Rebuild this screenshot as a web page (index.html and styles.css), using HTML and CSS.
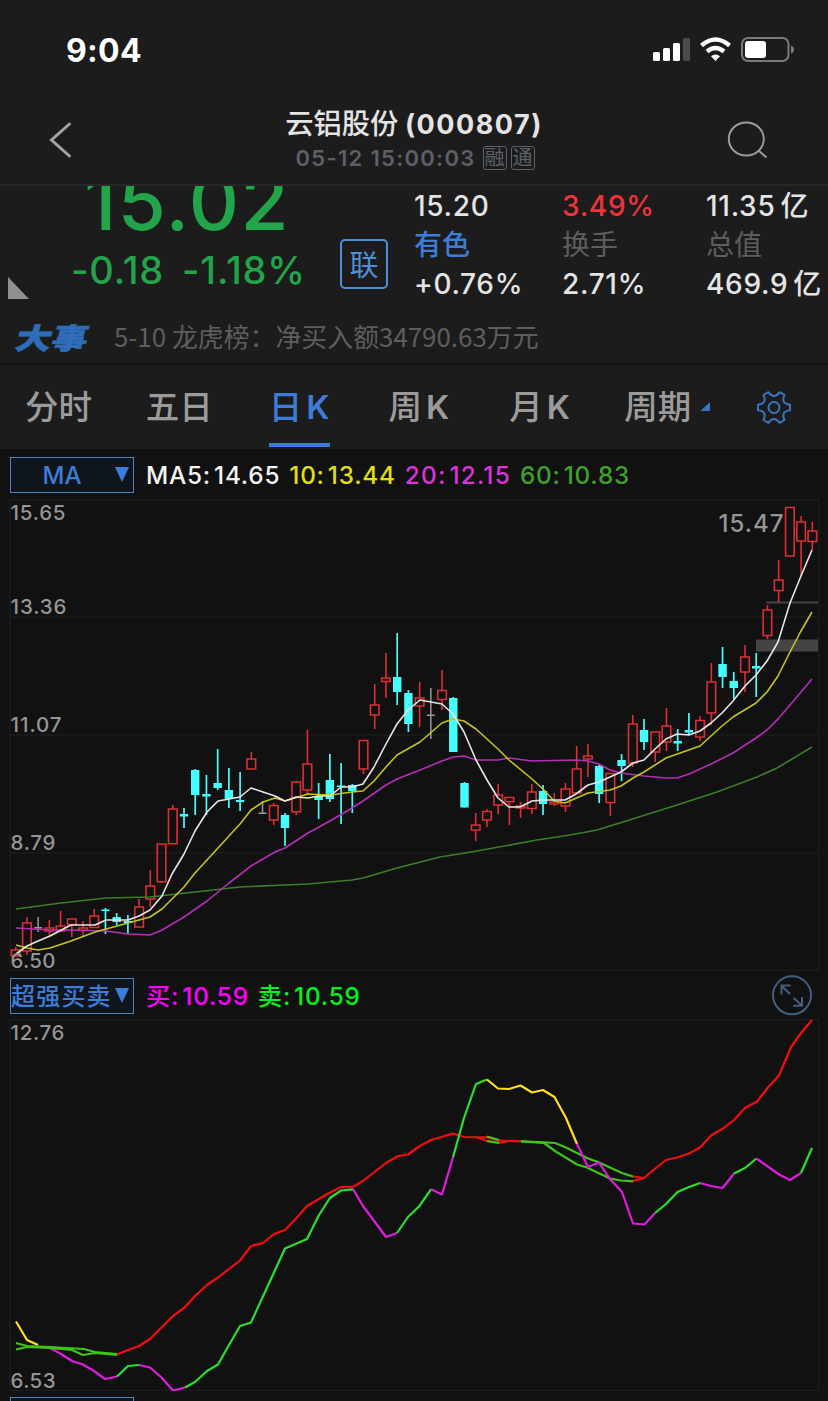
FILE: index.html
```
<!DOCTYPE html>
<html lang="zh-CN">
<head>
  <meta charset="UTF-8" />
  <title>云铝股份 (000807)</title>
  <link rel="stylesheet" href="styles.css">
</head>
<body>
  <div class="status">
    <span class="time">9:04</span>
    <svg class="status-icons" width="144" height="30" viewBox="650 35 144 30">
      <g fill="#fff">
        <rect x="653" y="52" width="7" height="9" rx="1.5"/>
        <rect x="663" y="48" width="7" height="13" rx="1.5"/>
        <rect x="673" y="43" width="7" height="18" rx="1.5"/>
        <rect x="683" y="38" width="7" height="23" rx="1.5" fill="#4b4b4b"/>
        <path d="M715.5 61 L711 56.3 Q715.5 52.8 720 56.3 Z"/>
        <rect x="745" y="41" width="21" height="17" rx="3"/>
      </g>
      <path d="M701.5 45.5 Q715.5 33.5 729.5 45.5 M707 51.5 Q715.5 44.5 724 51.5" fill="none" stroke="#fff" stroke-width="4.4"/>
      <rect x="742" y="38" width="46.5" height="23" rx="6" fill="none" stroke="#7b7b7b" stroke-width="2"/>
      <path d="M791 45.5 Q794 46.5 794 49.5 Q794 52.5 791 53.5 Z" fill="#7b7b7b"/>
    </svg>
  </div>

  <header class="header">
    <svg width="30" height="40" viewBox="45 120 30 40">
      <path d="M69.5 124 L51.5 140 L69.5 156" fill="none" stroke="#a3a3a3" stroke-width="3" stroke-linecap="round"/>
    </svg>
    <div class="title">
      <h1>云铝股份 <b>(000807)</b></h1>
      <p><span class="date">05-12 15:00:03</span><i>融</i><i>通</i></p>
    </div>
    <svg width="44" height="44" viewBox="726 118.5 44 44">
      <g fill="none" stroke="#9c9c9c" stroke-width="2">
        <ellipse cx="746.3" cy="139.5" rx="17.5" ry="16.5"/>
        <path d="M758.5 151 L766.5 158"/>
      </g>
    </svg>
  </header>

  <section class="quote">
    <div class="price">
      <div class="last">15.02</div>
      <div class="change"><span>-0.18</span><span>-1.18%</span></div>
    </div>
    <div class="badge">联</div>
    <div class="stats">
      <span>15.20</span><span class="up">3.49%</span><span>11.35<em>亿</em></span>
      <span class="link">有色</span><span class="label">换手</span><span class="label">总值</span>
      <span>+0.76%</span><span>2.71%</span><span>469.9<em>亿</em></span>
    </div>
    <div class="corner"></div>
  </section>

  <div class="news">
    <strong>大事</strong>
    <span class="news-text">5-10 龙虎榜：净买入额34790.63万元</span>
  </div>

  <nav class="tabs">
    <a>分时</a>
    <a>五日</a>
    <a class="active">日<b>K</b></a>
    <a>周<b>K</b></a>
    <a class="month">月<b>K</b></a>
    <a class="period">周期</a>
    <svg width="36" height="36" viewBox="756 388 36 36">
      <g fill="none" stroke="#3a74bd" stroke-width="2" stroke-linejoin="round">
        <path d="M768.4 391.2 Q774 399 779.6 391.2 L784.5 394 Q780.5 402.7 790 403.7 V409.3 Q780.5 410.3 784.5 419 L779.6 421.8 Q774 414 768.4 421.8 L763.5 419 Q767.5 410.3 758 409.3 V403.7 Q767.5 402.7 763.5 394 Z"/>
        <circle cx="774" cy="406.5" r="5.5"/>
      </g>
    </svg>
  </nav>

  <div class="legend legend-ma">
    <button>MA</button>
    <span class="ma5">MA5:<b>14.65</b></span>
    <span class="ma10">10:<b>13.44</b></span>
    <span class="ma20">20:<b>12.15</b></span>
    <span class="ma60">60:<b>10.83</b></span>
  </div>
  <svg id="kline" class="chart" width="828" height="472" viewBox="0 499 828 472"></svg>

  <div class="legend legend-signal">
    <button>超强买卖</button>
    <span class="buy">买:<b>10.59</b></span>
    <span class="sell">卖:<b>10.59</b></span>
    <svg class="expand" width="42" height="42" viewBox="771 974 42 42">
      <g fill="none" stroke="#435f7f" stroke-width="2">
        <circle cx="792" cy="995.3" r="19"/>
        <path d="M790 994 L781.5 986 M781.5 994.5 V985.5 H790.5 M793.5 998 L802 1005.5 M802 997 V1005.8 H793"/>
      </g>
    </svg>
  </div>
  <svg id="signal" class="chart" width="828" height="372" viewBox="0 1019 828 372"></svg>

  <div class="legend legend-next"><button></button></div>

  <script src="chart.js"></script>
</body>
</html>
```
FILE: styles.css
```
* {
  box-sizing: border-box;
}
body {
  margin: 0;
  width: 828px;
  height: 1401px;
  overflow: hidden;
  background: #1c1c1c;
  color: #e4e4e4;
  font-family: Inter, "Noto Sans CJK SC", sans-serif;
}
svg {
  display: block;
  flex: none;
}
h1, p {
  margin: 0;
}
b, em, i {
  font-style: normal;
  font-weight: inherit;
}

.status {
  display: flex;
  justify-content: space-between;
  height: 96px;
  padding: 35px 34px 0 66px;
}
.time {
  color: #fff;
  font-size: 32px;
  line-height: 31px;
  font-weight: 700;
  letter-spacing: 0.3px;
}

.header {
  display: flex;
  justify-content: space-between;
  align-items: center;
  height: 90px;
  padding: 0 58px 0 45px;
  border-bottom: 2px solid #272727;
}
.title {
  width: 270px;
  padding-top: 1px;
  margin-left: 27px;
  text-align: center;
}
.title h1 {
  height: 34px;
  font-size: 28.3px;
  line-height: 35px;
  font-weight: 500;
  white-space: nowrap;
}
.title h1 b {
  margin-left: -1px;
  font-size: 27px;
  font-weight: 700;
  letter-spacing: 1.5px;
}
.title p {
  display: flex;
  justify-content: center;
  align-items: center;
  height: 34px;
  padding-left: 2px;
  color: #5b606b;
  font-size: 22px;
  font-weight: 600;
  white-space: nowrap;
}
.title .date {
  margin-right: 3px;
  letter-spacing: 1.3px;
}
.title i {
  width: 24px;
  height: 24px;
  margin-left: 4px;
  border: 1px solid #5b606b;
  border-radius: 3px;
  font-size: 20px;
  line-height: 23px;
  font-weight: 400;
  text-align: center;
}

.quote {
  position: relative;
  display: flex;
  height: 124px;
  overflow: hidden;
}
.price {
  width: 340px;
  color: #22a44a;
  font-weight: 500;
}
.last {
  height: 60px;
  margin-top: -14px;
  padding-left: 84px;
  font-size: 78px;
  line-height: 60px;
  letter-spacing: 1.5px;
}
.change {
  display: flex;
  gap: 18px;
  padding-left: 71px;
  margin-top: 18px;
  font-size: 38px;
  line-height: 40px;
  letter-spacing: 0.8px;
}
.badge {
  width: 48px;
  height: 50px;
  margin: 53px 27px 0 0;
  border: 2px solid #4d8fd9;
  border-radius: 5px;
  color: #4d8fd9;
  font-size: 29px;
  line-height: 49px;
  text-align: center;
}
.stats {
  display: grid;
  grid-template-columns: 148px 144px 122px;
  grid-auto-rows: 39px;
  margin-left: -1px;
  padding-top: 1px;
  font-size: 28px;
  line-height: 39px;
  font-weight: 500;
  letter-spacing: 0.7px;
  white-space: nowrap;
}
.stats em {
  margin-left: 5px;
}
.up {
  color: #f0323a;
}
.stats .link {
  color: #3d7dd8;
  letter-spacing: 0;
}
.stats .label {
  color: #5e5e5e;
  font-weight: 400;
  letter-spacing: 0;
}
.corner {
  position: absolute;
  left: 8px;
  top: 91px;
  width: 21px;
  height: 22px;
  background: #8f8f8f;
  clip-path: polygon(0 0, 100% 100%, 0 100%);
}

.news {
  display: flex;
  align-items: center;
  height: 55px;
  padding-left: 17px;
  border-bottom: 2px solid #131313;
}
.news strong {
  width: 97px;
  color: #2f6db8;
  font-family: "Noto Sans CJK SC", sans-serif;
  font-size: 36px;
  line-height: 40px;
  font-weight: 900;
  margin-top: -2px;
  -webkit-text-stroke: 0.7px #2f6db8;
  transform: skewX(-14deg) scaleY(0.8);
}
.news-text {
  color: #5e5e5e;
  font-family: "Noto Sans CJK SC", sans-serif;
  font-size: 25.9px;
  line-height: 50px;
  font-weight: 400;
  margin-top: -1px;
}

.tabs {
  display: flex;
  height: 84px;
  padding: 0 36px 0 25px;
  color: #9b9b9b;
  font-size: 33.5px;
  line-height: 84px;
  font-weight: 500;
}
.tabs a {
  width: 121px;
  height: 84px;
  white-space: nowrap;
}
.tabs b {
  margin-left: 4px;
  font-size: 33px;
  font-weight: 600;
}
.tabs .active {
  width: 61px;
  height: 82px;
  margin: 0 59px 0 2px;
  border-bottom: 4px solid #3d7dd8;
  color: #3d7dd8;
}
.tabs .month {
  width: 115px;
}
.tabs .period {
  width: 132px;
}
.period::after {
  content: "";
  display: inline-block;
  width: 10px;
  height: 9px;
  margin-left: 9px;
  vertical-align: 8px;
  background: #3a74bd;
  clip-path: polygon(100% 0, 100% 100%, 0 100%);
}
.tabs svg {
  margin-top: 24px;
}

.legend {
  display: flex;
  padding: 8px 10px 0;
  background: #111;
  font-size: 24.3px;
  line-height: 37px;
  font-weight: 500;
  letter-spacing: 0.8px;
  white-space: nowrap;
}
.legend-ma {
  height: 50px;
  padding-top: 8px;
  gap: 9px;
}
.legend-signal {
  height: 48px;
  padding-top: 7px;
  gap: 9px;
}
.legend-next {
  height: 10px;
  padding-top: 6px;
}
.legend button {
  position: relative;
  width: 124px;
  height: 36px;
  margin-right: 3px;
  padding: 0 20px 0 0;
  border: 1px solid #4a86bd;
  background: #0e151d;
  color: #3d7dd8;
  font: inherit;
  font-size: 24px;
  line-height: 35px;
  letter-spacing: 0;
}
.legend-signal button {
  padding: 0;
  text-align: left;
  letter-spacing: 1.2px;
}
.legend button::after {
  content: "";
  position: absolute;
  right: 4px;
  top: 9px;
  width: 14px;
  height: 15px;
  background: #3d7dd8;
  clip-path: polygon(0 0, 100% 0, 50% 100%);
}
.legend b {
  margin-left: 3px;
}
.ma5 { color: #f4f4f4; }
.ma10 { color: #e0e010; }
.ma20 { color: #dc32dc; letter-spacing: 1.2px; }
.ma60 { color: #41a02c; }
.buy { color: #ff00ff; }
.sell { color: #00f51a; }
.expand {
  margin: -4px 5px 0 auto;
}

.chart {
  background: #111;
  font-size: 20.5px;
  font-weight: 500;
}
.chart polyline {
  fill: none;
  stroke-linejoin: round;
}
.grid {
  fill: none;
  stroke: #1d1d1d;
  stroke-width: 1.5;
}
.axis {
  fill: #969696;
}
```
FILE: chart.js
```
const STEP = 11.22;
const START = 15.7;

// r = up, c = down, g = unchanged: [type, high, top, bottom, low]
const candles = [
  ['r', 947, 950, 956, 957], ['r', 917, 923, 951, 955], ['g', 917, 927.7, 927.7, 932],
  ['r', 920, 928, 931, 937], ['r', 911, 926, 931, 931], ['r', 919, 919, 924.5, 937],
  ['r', 921, 928, 930.5, 936], ['r', 909, 916, 927.5, 928], ['c', 908, 909.5, 911, 934],
  ['c', 913, 917, 922, 925], ['c', 915, 921, 923, 934], ['r', 899, 907, 927, 927],
  ['r', 870, 886, 899, 907], ['r', 844, 844, 881.7, 883], ['r', 805, 809, 843.7, 844],
  ['c', 808, 814, 816.5, 828], ['c', 769, 770, 795, 815], ['c', 775, 794, 796.5, 815],
  ['c', 749, 783, 788, 790], ['c', 768, 790, 799, 808], ['c', 772, 800, 802, 811],
  ['r', 752, 759, 769, 769], ['g', 801, 813.3, 813.3, 813.3], ['r', 803, 805.5, 820, 825],
  ['c', 813, 815, 828, 846], ['r', 781, 782, 811.7, 815], ['r', 729.5, 764, 790, 795],
  ['c', 783, 796, 800, 819], ['c', 754, 780, 799, 802], ['c', 763, 785.5, 787, 824],
  ['c', 784, 785, 791, 813], ['r', 740, 740.5, 769, 774], ['r', 684, 705, 715, 729],
  ['r', 653, 678, 681.5, 698], ['c', 633, 677, 692, 705], ['c', 690, 693, 724, 732],
  ['r', 682, 698, 706, 727], ['g', 688, 715.3, 715.3, 739], ['r', 670, 690.5, 699.5, 710],
  ['c', 697, 698, 752, 752], ['c', 782, 783, 807.5, 807.5], ['r', 813, 825, 830, 841],
  ['r', 809, 811.5, 820, 827], ['r', 784, 795, 805, 814], ['r', 797, 797.5, 801.7, 825],
  ['r', 802, 806, 808, 818], ['r', 784, 792, 808.5, 814], ['c', 785, 791, 804, 815],
  ['r', 793, 802, 804, 806], ['r', 783, 789, 806, 812], ['r', 746, 769, 793, 793],
  ['r', 744, 756, 759, 777], ['c', 765, 766, 794, 803], ['r', 773, 773.5, 802.5, 816],
  ['c', 754, 760, 766, 781], ['r', 715, 724, 763, 767], ['c', 719, 730, 742, 750],
  ['r', 732, 732, 752, 762], ['r', 708, 726, 742, 751], ['c', 729, 741, 743.5, 751],
  ['c', 713, 730, 732.5, 735], ['r', 716, 720.5, 737, 741], ['r', 663, 682, 713, 725],
  ['c', 647, 664, 677, 688], ['c', 672, 681, 688, 699], ['r', 645, 657, 672, 692],
  ['c', 653, 666, 668.5, 697], ['r', 605, 610, 635.5, 639], ['r', 560, 580, 590.5, 602],
  ['r', 507, 507.5, 556, 556], ['r', 516, 522, 541, 576], ['r', 522, 531, 541.5, 550]
];

const averages = [
  ['#3b7f27', '16,909 61,903 106,898 150,897 195,892 240,887 285,885 308,884 352,880 363,878 397,868 440,857 477,851 537,840 570,835 597,830 623,822 677,805 717,792 757,777 777,768 812,747'],
  ['#b52db8', '16,928 50,930 71,930 106,931 128,934 150,935 162,930 184,917 207,901 229,883 251,866 275,852 285,848 308,833 330,821 352,808 363,801 386,785 397,779 420,770 442,761 453,757 464,756 476,760 498,760 509,758 532,761 576,760 588,761 599,764 610,770 621,773 644,776 666,778 677,778 689,774 711,764 733,753 756,738 767,730 778,719 790,705 801,692 812,679'],
  ['#c4c41c', '16,945 27,948 38,950 50,948 71,941 95,932 117,926 139,920 150,917 162,909 184,887 195,873 218,848 240,824 251,810 263,802 275,798 285,801 308,794 330,795 352,792 363,791 374,781 386,767 397,755 420,742 442,723 453,719 464,721 476,729 498,749 509,760 532,779 543,789 554,801 565,803 588,793 610,790 621,786 633,778 644,772 666,758 700,746 711,736 722,726 733,717 756,703 767,692 778,676 790,652 801,631 812,612'],
  ['#e6e6e6', '16,954 27,946 38,941 50,936 71,925 95,925 106,920 128,920 139,916 150,910 162,896 172,874 184,854 195,831 207,812 218,801 240,797 251,788 263,792 275,796 285,801 296,797 308,798 318,796 330,796 341,787 352,787 363,784 374,767 386,744 397,724 408,710 420,700 442,704 453,714 464,732 476,760 487,780 498,798 509,807 520,807 532,801 543,800 565,800 576,794 588,785 599,782 621,772 633,763 644,760 655,749 666,739 677,734 689,735 700,731 711,723 722,713 733,701 745,686 756,675 767,661 778,642 790,603 801,576 812,550']
];

const RED = '#f20d12';
const GREEN = '#2ae02e';
const LIME = '#3fc418';
const PINK = '#e01be0';
const YELLOW = '#ffdf20';

const signals = [
  [RED, '117,1354.5 128,1350 139,1346 150,1339 173,1316 184,1308 196,1295 207,1285 218,1277.5 229,1269 240,1260.5 251,1246 263,1243 274,1234 285,1230 296,1218.5 307,1206 329,1193 341,1187 353,1186.7 363,1181 377,1170 386,1163 398,1156 408,1154.5 419,1146.5 431,1140 453,1133.5 464,1137 487,1137.3 499,1140.7 521,1141.3'],
  [RED, '476,1137 487,1141 499,1143 509,1141'],
  [RED, '633,1176.5 644,1178 654,1169.5 666,1160 677,1157.5 689,1153.5 700,1147.5 711,1135.5 723,1128.5 734,1120 745,1108 757,1101.5 768,1087.5 779,1075.5 791,1047 801,1033 812,1020'],
  [RED, '633,1181 644,1178'],
  [LIME, '487,1136.5 499,1140'],
  [LIME, '487,1141 499,1143'],
  [LIME, '521,1141.3 544,1142.3 555,1143 566,1147.5 587,1158 599,1162.5 622,1173 633,1176.5'],
  [LIME, '521,1141.3 544,1143 555,1151 577,1164.5 587,1167.5 610,1178.5 621,1180.5 633,1181.3'],
  [PINK, '50,1348 61,1354 72,1361 83,1364.5 94,1371 105,1379 117,1376.5'],
  [YELLOW, '16,1321.5 27,1340 38,1345'],
  [LIME, '16,1343 27,1346 50,1347 84,1349 95,1352 117,1354'],
  [LIME, '16,1349.5 27,1347 50,1348 72,1350 83,1355 95,1353 117,1355'],
  [GREEN, '117,1376.5 128,1366 139,1365'],
  [PINK, '139,1365 150,1367.5 161,1377 173,1390.5 185,1387.5'],
  [GREEN, '185,1387.5 195,1382 207,1371 218,1364.5 229,1345 240,1326 251,1322.5 285,1248.5 307,1239 319,1215 330,1198 341,1190.5 353,1189.3'],
  [PINK, '353,1189 363,1206 386,1237 397,1233'],
  [GREEN, '397,1233 408,1217 419,1206.5 431,1189.3'],
  [PINK, '431,1189.3 442,1194.5 453,1157.3'],
  [GREEN, '453,1157.3 464,1118 476,1084 487,1079.5'],
  [YELLOW, '487,1079.5 498,1088.5 509,1089 520.5,1085.5 532,1092.5 543,1090 554.5,1097 566,1118 577,1144'],
  [PINK, '577,1144 588,1167 599,1162.5 610,1179 622,1192 633,1223.5 644.5,1224.5 655,1213'],
  [GREEN, '655,1213 666,1204 677.5,1192 689,1187 700,1183'],
  [PINK, '700,1183 711,1186 722.5,1188 734,1173.5'],
  [GREEN, '734,1173.5 745,1168 756.5,1158.5'],
  [PINK, '756.5,1158.5 779,1174.5 790,1180 801,1173'],
  [GREEN, '801,1173 812,1148']
];

function lines(list, width) {
  return list.map(([color, points]) =>
    `<polyline points="${points}" stroke="${color}" stroke-width="${width}"/>`).join('');
}

function candle([type, high, top, bottom, low], i) {
  const x = START + STEP * i;
  if (type === 'r') {
    return `<path d="M${x} ${high}V${top}M${x} ${bottom}V${low}M${x - 4.3} ${top}h8.6V${bottom}h-8.6Z" fill="none" stroke="#dc2f35" stroke-width="1.6"/>`;
  }
  if (type === 'g') {
    return `<path d="M${x} ${high}V${low}M${x - 4} ${top}h8" stroke="#999" stroke-width="1.5"/>`;
  }
  return `<path d="M${x} ${high}V${low}" stroke="#4ff" stroke-width="1.7"/>
    <rect x="${x - 4.2}" y="${top}" width="8.4" height="${bottom - top}" fill="#4ff"/>`;
}

function label(text, y, width) {
  return `<text class="axis" x="10.5" y="${y}" textLength="${width}">${text}</text>`;
}

document.getElementById('kline').innerHTML =
  '<path class="grid" d="M10 499.7H818.5V970.5H10ZM10 617H818M10 735H818M10 853H818"/>' +
  '<path d="M766 602.5H818" stroke="#444" stroke-width="2"/>' +
  '<rect x="756" y="639.5" width="62" height="12" fill="#444"/>' +
  candles.map(candle).join('') +
  lines(averages, 1.6) +
  label('15.65', 520, 55) + label('13.36', 613.5, 56) + label('11.07', 731.5, 51) +
  label('8.79', 849.5, 45) + label('6.50', 967.5, 45) +
  '<text class="axis" x="718.5" y="531.5" font-size="24" textLength="65">15.47</text>';

document.getElementById('signal').innerHTML =
  '<path class="grid" d="M10 1019.7H818.5V1390.5H10Z"/>' +
  lines(signals, 2.2) +
  label('12.76', 1039.5, 54) + label('6.53', 1387.5, 45);
```
